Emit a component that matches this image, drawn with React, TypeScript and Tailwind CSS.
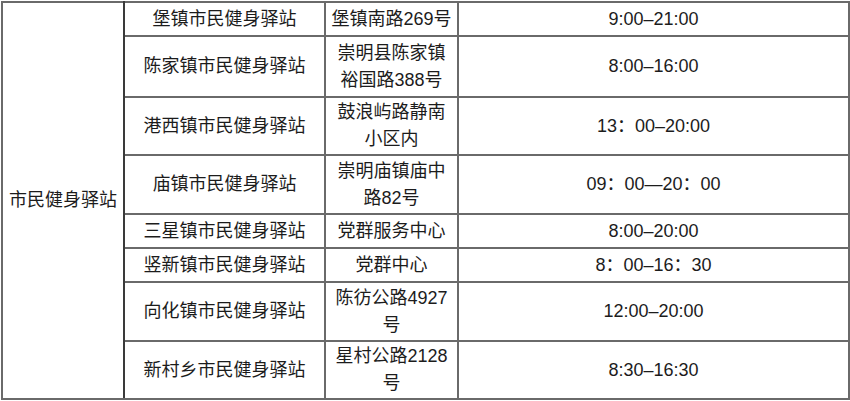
import type { ReactNode } from "react";

type Row = {
  name: string;
  address: ReactNode;
  hours: string;
  height: string;
};

const rows: Row[] = [
  { name: "堡镇市民健身驿站", address: "堡镇南路269号", hours: "9:00–21:00", height: "h-[34px]" },
  {
    name: "陈家镇市民健身驿站",
    address: (
      <>
        崇明县陈家镇
        <br />
        裕国路388号
      </>
    ),
    hours: "8:00–16:00",
    height: "h-[61px]",
  },
  {
    name: "港西镇市民健身驿站",
    address: (
      <>
        鼓浪屿路静南
        <br />
        小区内
      </>
    ),
    hours: "13：00–20:00",
    height: "h-[58px]",
  },
  {
    name: "庙镇市民健身驿站",
    address: (
      <>
        崇明庙镇庙中
        <br />
        路82号
      </>
    ),
    hours: "09：00—20：00",
    height: "h-[59px]",
  },
  { name: "三星镇市民健身驿站", address: "党群服务中心", hours: "8:00–20:00", height: "h-[34px]" },
  { name: "竖新镇市民健身驿站", address: "党群中心", hours: "8：00–16：30", height: "h-[34px]" },
  {
    name: "向化镇市民健身驿站",
    address: (
      <>
        陈彷公路4927
        <br />号
      </>
    ),
    hours: "12:00–20:00",
    height: "h-[59px]",
  },
  {
    name: "新村乡市民健身驿站",
    address: (
      <>
        星村公路2128
        <br />号
      </>
    ),
    hours: "8:30–16:30",
    height: "h-[58px]",
  },
];

const cell = "border-2 border-[#6a6a6a] text-center align-middle p-0";

export default function App() {
  return (
    <div className="w-[850px] h-[401px] bg-white pt-px pl-px">
      <table
        className="w-[849px] border-collapse text-[18px] leading-[27px] text-[#1c1c1c]"
        style={{ fontFamily: '"Liberation Sans", "Noto Sans CJK SC", sans-serif' }}
      >
        <colgroup>
          <col className="w-[122px]" />
          <col className="w-[201px]" />
          <col className="w-[133px]" />
          <col />
        </colgroup>
        <tbody>
          {rows.map((r, i) => (
            <tr key={r.name} className={r.height}>
              {i === 0 ? (
                <td rowSpan={rows.length} className={`${cell} border-r-[#3a3a3a]`}>
                  市民健身驿站
                </td>
              ) : null}
              <td className={cell}>{r.name}</td>
              <td className={cell}>{r.address}</td>
              <td className={cell}>{r.hours}</td>
            </tr>
          ))}
        </tbody>
      </table>
    </div>
  );
}
